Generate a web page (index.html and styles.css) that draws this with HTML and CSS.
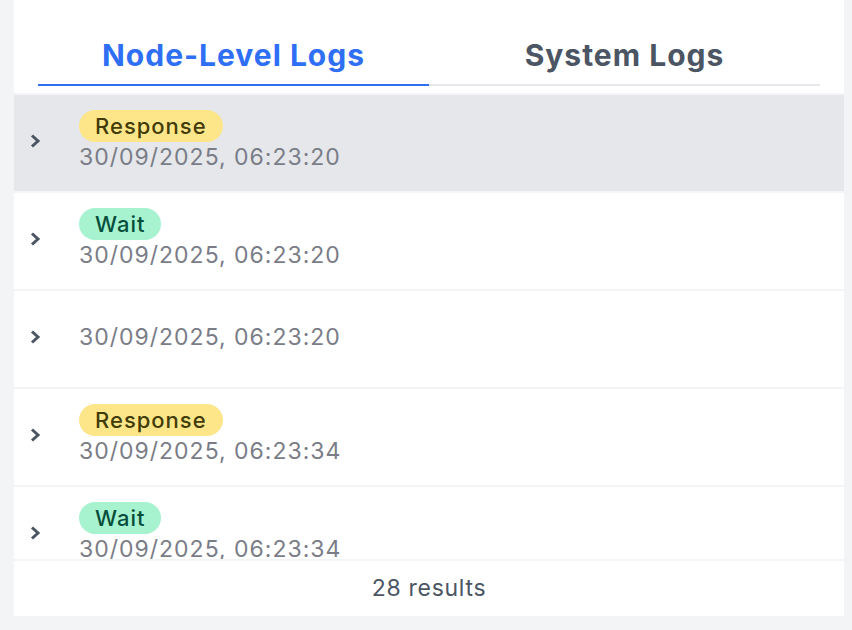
FILE: index.html
```html
<!DOCTYPE html>
<html>
	<head>
		<meta charset="UTF-8">
		<title>Logs</title>
		<link rel="stylesheet" href="styles.css">
	</head>
	<body>
		<div class="panel">
			<div class="tabs">
				<div class="tab active">Node-Level Logs</div>
				<div class="tab">System Logs</div>
			</div>
			<ul class="logList">
				<li class="hover">
					<svg class="chevron" width="12" height="14" viewBox="0 0 12 14"><polyline points="3,1.5 9,7 3,12.5" fill="none" stroke="#4b5563" stroke-width="3"/></svg>
					<div class="info">
						<span class="badge response">Response</span>
						<span class="stamp">30/09/2025, 06:23:20</span>
					</div>
				</li>
				<li>
					<svg class="chevron" width="12" height="14" viewBox="0 0 12 14"><polyline points="3,1.5 9,7 3,12.5" fill="none" stroke="#4b5563" stroke-width="3"/></svg>
					<div class="info">
						<span class="badge wait">Wait</span>
						<span class="stamp">30/09/2025, 06:23:20</span>
					</div>
				</li>
				<li>
					<svg class="chevron" width="12" height="14" viewBox="0 0 12 14"><polyline points="3,1.5 9,7 3,12.5" fill="none" stroke="#4b5563" stroke-width="3"/></svg>
					<div class="info">
						<span class="stamp">30/09/2025, 06:23:20</span>
					</div>
				</li>
				<li>
					<svg class="chevron" width="12" height="14" viewBox="0 0 12 14"><polyline points="3,1.5 9,7 3,12.5" fill="none" stroke="#4b5563" stroke-width="3"/></svg>
					<div class="info">
						<span class="badge response">Response</span>
						<span class="stamp">30/09/2025, 06:23:34</span>
					</div>
				</li>
				<li>
					<svg class="chevron" width="12" height="14" viewBox="0 0 12 14"><polyline points="3,1.5 9,7 3,12.5" fill="none" stroke="#4b5563" stroke-width="3"/></svg>
					<div class="info">
						<span class="badge wait">Wait</span>
						<span class="stamp">30/09/2025, 06:23:34</span>
					</div>
				</li>
			</ul>
			<div class="footer">28 results</div>
		</div>
	</body>
</html>
```

FILE: styles.css
```css
body, div, ul{
	margin: 0;
	padding: 0;
}
li{
	list-style: none;
}
body{
	background: #f3f4f6;
	font-family: Inter, "Noto Sans", sans-serif;
}
.panel{
	margin: 0 8px 0 14px;
	height: 616px;
	background: #fff;
	display: flex;
	flex-direction: column;
}
.tabs{
	display: flex;
	margin: 0 24px;
	padding: 35px 0 7px 0;
}
.tab{
	flex: 1;
	text-align: center;
	font-size: 30px;
	font-weight: 700;
	letter-spacing: 1px;
	line-height: 40px;
	padding-bottom: 9px;
	color: #4b5563;
	border-bottom: solid 2px #e5e7eb;
}
.tab.active{
	color: #2f6ff5;
	border-bottom-color: #2f6ff5;
}
.logList{
	flex: 1;
	overflow: hidden;
	border-top: solid 2px #f3f4f6;
}
.logList li{
	display: flex;
	align-items: center;
	min-height: 64px;
	padding: 14px 0 18px 0;
	border-bottom: solid 2px #f3f4f6;
}
.logList li.hover{
	background: #e5e7eb;
}
.chevron{
	margin-left: 15px;
	margin-right: 38px;
}
.info{
	display: flex;
	flex-direction: column;
	align-items: flex-start;
}
.badge{
	height: 32px;
	line-height: 32px;
	padding: 0 16px;
	border-radius: 16px;
	font-size: 22px;
	font-weight: 500;
	letter-spacing: 1px;
}
.badge.response{
	background: #fde68a;
	color: #423c08;
}
.badge.wait{
	background: #a7f3d0;
	color: #064e3b;
}
.stamp{
	font-size: 23px;
	letter-spacing: 1px;
	line-height: 30px;
	color: #7a7d87;
}
.footer{
	height: 55px;
	line-height: 55px;
	text-align: center;
	font-size: 23px;
	letter-spacing: 0.7px;
	color: #4b5563;
	border-top: solid 2px #f3f4f6;
}
```
